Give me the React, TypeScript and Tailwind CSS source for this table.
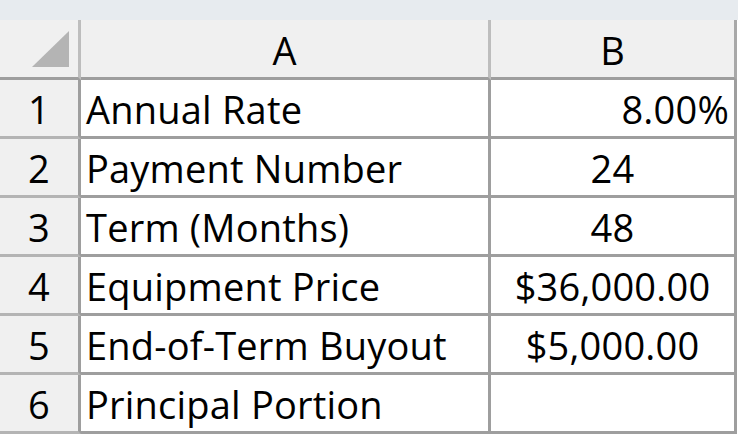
import React from "react";

const rows = [
	{ n: "1", a: "Annual Rate", b: "8.00%", align: "right" },
	{ n: "2", a: "Payment Number", b: "24", align: "center" },
	{ n: "3", a: "Term (Months)", b: "48", align: "center" },
	{ n: "4", a: "Equipment Price", b: "$36,000.00", align: "center" },
	{ n: "5", a: "End-of-Term Buyout", b: "$5,000.00", align: "center" },
	{ n: "6", a: "Principal Portion", b: "", align: "center" },
];

export default function App() {
	return (
		<div
			className="w-[738px] h-[435px] bg-white text-black overflow-hidden"
			style={{ fontFamily: '"Open Sans", "Noto Sans", sans-serif' }}
		>
			{/* strip above the sheet */}
			<div className="h-[20px] bg-[#e7ebef]" />
			<div className="grid grid-cols-[81px_410px_246px] grid-rows-[60px_repeat(6,59px)] text-[38px] leading-none tracking-[0.2px]">
				{/* header row */}
				<div className="bg-[#f0f0f0] border-r-[3px] border-b-[3px] border-r-[#bdbdbd] border-b-[#9e9e9e]">
					<svg width="78" height="57" viewBox="0 0 78 57">
						<polygon points="32,47 69,11 69,47" fill="#b4b4b4" />
					</svg>
				</div>
				<div className="bg-[#f0f0f0] border-r-[3px] border-b-[3px] border-r-[#bdbdbd] border-b-[#9e9e9e] flex items-center justify-center pt-[2px]">
					A
				</div>
				<div className="bg-[#f0f0f0] border-r-[3px] border-b-[3px] border-r-[#a8a8a8] border-b-[#9e9e9e] flex items-center justify-center pt-[2px]">
					B
				</div>

				{rows.map((r) => (
					<React.Fragment key={r.n}>
						<div className="bg-[#f0f0f0] border-r-[3px] border-b-[3px] border-r-[#9e9e9e] border-b-[#b4b4b4] flex items-center justify-center pt-[2px]">
							{r.n}
						</div>
						<div className="border-r-[3px] border-b-[3px] border-[#9e9e9e] flex items-center pl-[5px] pt-[2px] whitespace-nowrap">
							{r.a}
						</div>
						<div
							className={
								r.align === "right"
									? "border-r-[3px] border-b-[3px] border-[#9e9e9e] flex items-center justify-end pr-[5px] pt-[2px] whitespace-nowrap"
									: "border-r-[3px] border-b-[3px] border-[#9e9e9e] flex items-center justify-center pt-[2px] whitespace-nowrap"
							}
						>
							{r.b}
						</div>
					</React.Fragment>
				))}
			</div>
		</div>
	);
}
